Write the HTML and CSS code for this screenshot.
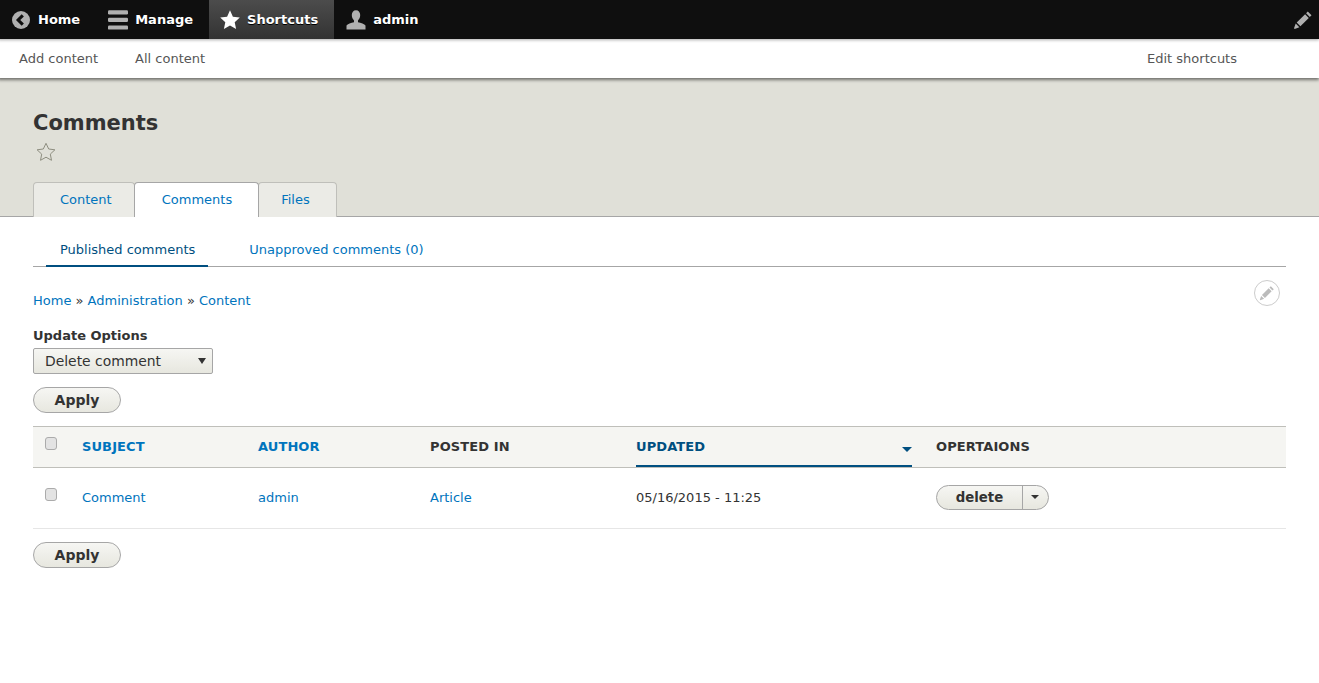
FILE: index.html
```html
<!DOCTYPE html>
<html lang="en">
<head>
<meta charset="utf-8">
<title>Comments</title>
<link rel="stylesheet" href="styles.css">
</head>
<body>
<nav class="toolbar">
  <div class="toolbar-items">
    <a class="tool tool-home" href="#"><svg class="ico" viewBox="0 0 20 20"><circle cx="10" cy="10" r="10" fill="#b0b0b0"/><path d="M12 4.800 6.800 10l5.200 5.200" fill="none" stroke="#0f0f0f" stroke-width="3.400"/></svg>Home</a>
    <a class="tool tool-manage" href="#"><svg class="ico-menu" viewBox="0 0 20 20"><rect y="0.2" width="20" height="4.200" rx="1.200" fill="#b0b0b0"/><rect y="7.800" width="20" height="4.200" rx="1.200" fill="#b0b0b0"/><rect y="15.400" width="20" height="4.200" rx="1.200" fill="#b0b0b0"/></svg>Manage</a>
    <a class="tool tool-active" href="#"><svg class="ico-star" viewBox="0 0 20 20"><path d="M10 .3l2.900 6.400 6.900.8-5.100 4.700 1.400 6.900L10 15.600l-6.100 3.500 1.400-6.900L.2 7.500l6.900-.8z" fill="#fff"/></svg>Shortcuts</a>
    <a class="tool tool-user" href="#"><svg class="ico-user" viewBox="0 0 20 20"><path d="M10 .3c2.700 0 4.200 2.100 4.200 4.800 0 2.300-1 4.300-2.200 5.300v1.800c2.800.6 6.600 1.700 7.500 3.400v4H.5v-4c.9-1.700 4.700-2.800 7.500-3.400v-1.800c-1.200-1-2.200-3-2.200-5.300C5.800 2.400 7.300.3 10 .3z" fill="#b0b0b0"/></svg>admin</a>
  </div>
  <a class="pencil" href="#" aria-label="Edit"><svg viewBox="0 0 20 20"><path d="M14.800 1.500l3.700 3.700-1.700 1.700-3.700-3.700zM12.100 4.200l3.700 3.700-8.400 8.400-3.700-3.700zM2.700 13.600l3.700 3.700-4.700 1.700-.7-.7z" fill="#b0b0b0"/></svg></a>
</nav>
<div class="tray">
  <div class="tray-links">
    <a href="#">Add content</a>
    <a href="#">All content</a>
  </div>
  <a class="tray-edit" href="#">Edit shortcuts</a>
</div>
<header class="page-head">
  <h1>Comments</h1>
  <svg class="fav" viewBox="0 0 20 20"><path d="M10 1.300l2.700 5.700 6.200.8-4.600 4.300 1.200 6.200L10 15.200l-5.500 3.100 1.200-6.200-4.600-4.300 6.200-.8z" fill="none" stroke="#8e8e80" stroke-width="1"/></svg>
  <ul class="tabs">
    <li class="tab-first"><a href="#">Content</a></li>
    <li class="tab-active"><a href="#">Comments</a></li>
    <li class="tab-last"><a href="#">Files</a></li>
  </ul>
</header>
<main class="content">
  <ul class="subtabs">
    <li class="subtab-active"><a href="#">Published comments</a></li>
    <li><a href="#">Unapproved comments (0)</a></li>
  </ul>
  <div class="crumb-row">
    <div class="crumbs"><a href="#">Home</a> » <a href="#">Administration</a> » <a href="#">Content</a></div>
    <a class="ctx" href="#" aria-label="Configure"><svg viewBox="0 0 20 20"><path d="M14.800 1.500l3.700 3.700-1.700 1.700-3.700-3.700zM12.100 4.200l3.700 3.700-8.400 8.400-3.700-3.700zM2.700 13.600l3.700 3.700-4.700 1.700-.7-.7z" fill="#bbb"/></svg></a>
  </div>
  <label class="field-label">Update Options</label>
  <div class="select"><span>Delete comment</span><i class="caret"></i></div>
  <button class="btn" type="button">Apply</button>
  <table class="grid">
    <thead>
      <tr>
        <th class="c-check"><span class="check"></span></th>
        <th class="c-subject"><a href="#">SUBJECT</a></th>
        <th class="c-author"><a href="#">AUTHOR</a></th>
        <th class="c-posted">POSTED IN</th>
        <th class="c-updated"><a class="sorted" href="#">UPDATED<i class="sort-caret"></i></a></th>
        <th>OPERTAIONS</th>
      </tr>
    </thead>
    <tbody>
      <tr>
        <td><span class="check"></span></td>
        <td><a href="#">Comment</a></td>
        <td><a href="#">admin</a></td>
        <td><a href="#">Article</a></td>
        <td>05/16/2015 - 11:25</td>
        <td><div class="dropbutton"><span class="drop-main">delete</span><span class="drop-toggle"><i class="caret-small"></i></span></div></td>
      </tr>
    </tbody>
  </table>
  <button class="btn btn-bottom" type="button">Apply</button>
</main>
</body>
</html>
```
FILE: styles.css
```css
* { box-sizing: border-box; }
html, body { margin: 0; padding: 0; }
body {
  font-family: "DejaVu Sans", sans-serif;
  font-size: 13px;
  color: #333;
  background: #fff;
  height: 683px;
  overflow: hidden;
}
a { color: #0074bd; text-decoration: none; }
ul { list-style: none; margin: 0; padding: 0; }

.toolbar {
  height: 39px;
  background: #0f0f0f;
  display: flex;
  justify-content: space-between;
  align-items: stretch;
  position: relative;
  z-index: 2;
  box-shadow: -1px 0 3px 1px rgba(0, 0, 0, 0.33);
}
.toolbar-items { display: flex; }
.tool {
  display: flex;
  align-items: center;
  color: #fff;
  font-weight: bold;
  font-size: 13px;
  padding: 0 15px 0 12px;
  text-shadow: 0 1px 0 #000;
}
.tool-home { padding-right: 16px; }
.ico { width: 18px; height: 18px; margin-right: 8px; }
.tool-manage { padding: 0 16px 0 12px; }
.ico-menu { width: 20px; height: 20px; margin-right: 7px; }
.tool-active {
  background: linear-gradient(#4c4c4c, #333);
  padding: 0 16px 0 11px;
}
.ico-star { width: 20px; height: 20px; margin-right: 7px; }
.tool-user { padding: 0 12px 0 12px; }
.ico-user { width: 20px; height: 20px; margin-right: 7px; }
.pencil { width: 20px; height: 20px; margin: 10px 6px 0 0; }
.pencil svg { display: block; width: 20px; height: 20px; }

.tray {
  height: 39px;
  background: #fff;
  display: flex;
  justify-content: space-between;
  align-items: center;
  padding: 0 82px 0 19px;
  box-shadow: -1px 1px 3px 1px rgba(0, 0, 0, 0.5);
  position: relative;
  z-index: 1;
}
.tray a { color: #565656; }
.tray-links { display: flex; gap: 37px; }

.page-head {
  background: #e0e0d8;
  height: 139px;
  padding: 32px 33px 0;
  border-bottom: 1px solid #a6a6a6;
}
.page-head h1 {
  margin: 0;
  font-size: 21px;
  line-height: 26px;
  font-weight: bold;
  color: #333;
}
.fav { display: block; width: 20px; height: 20px; margin: 6px 0 0 3px; }
.tabs { display: flex; margin-top: 20px; }
.tabs li {
  height: 35px;
  background: #ebebe6;
  border: 1px solid #bfbfba;
  border-bottom: 0;
  border-radius: 4px 4px 0 0;
  padding: 0 26px;
  line-height: 34px;
  margin-right: -1px;
}
.tabs .tab-first { padding-right: 22px; }
.tabs .tab-last { padding-left: 22px; }
.tabs .tab-active {
  background: #fff;
  border-color: #a6a6a6;
  position: relative;
  z-index: 1;
  padding-left: 27px;
}

.content { padding: 16px 33px 0; }
.subtabs {
  display: flex;
  height: 34px;
  border-bottom: 1px solid #a6a6a6;
  padding-left: 13px;
  gap: 14px;
}
.subtabs li { padding: 0 13px 0 14px; line-height: 33px; height: 34px; }
.subtabs .subtab-active { border-bottom: 2px solid #004f80; }
.subtabs .subtab-active a { color: #004f80; }
.subtabs .subtab-active + li { margin-left: 13px; }
.crumb-row {
  display: flex;
  justify-content: space-between;
  align-items: flex-start;
  height: 64px;
  padding-top: 13px;
}
.crumbs { margin-top: 12px; line-height: 17px; color: #333; }
.ctx {
  width: 26px;
  height: 26px;
  margin: 0 6px 0 0;
  border: 1px solid #ccc;
  border-radius: 50%;
  background: #fff;
  display: flex;
  align-items: center;
  justify-content: center;
}
.ctx svg { width: 16px; height: 16px; }
.field-label {
  display: block;
  font-weight: bold;
  line-height: 16px;
  margin-top: -3px;
}
.select {
  width: 180px;
  height: 26px;
  margin-top: 4px;
  border: 1px solid #a6a6a6;
  border-radius: 2px;
  background: linear-gradient(#f6f6f3, #e7e7df);
  display: flex;
  align-items: center;
  justify-content: space-between;
  padding: 0 6px 0 11px;
  font-size: 13.9px;
  color: #333;
}
.caret {
  width: 0;
  height: 0;
  border-left: 4.5px solid transparent;
  border-right: 4.5px solid transparent;
  border-top: 6px solid #333;
}
.btn {
  display: block;
  width: 88px;
  height: 26px;
  margin-top: 13px;
  padding: 0;
  border: 1px solid #a6a6a6;
  border-radius: 13px;
  background: linear-gradient(#f6f6f3, #e7e7df);
  font-family: "DejaVu Sans", sans-serif;
  font-weight: bold;
  font-size: 14px;
  color: #333;
}
.btn-bottom { margin-top: 13px; }

.grid {
  width: 1253px;
  margin-top: 13px;
  border-collapse: collapse;
  table-layout: fixed;
}
.grid th {
  height: 41px;
  background: #f5f5f2;
  border-top: 1px solid #bfbfba;
  border-bottom: 1px solid #bfbfba;
  text-align: left;
  padding: 0 12px 2px;
  font-size: 13px;
  letter-spacing: 0.1px;
  font-weight: bold;
  color: #333;
}
.grid td {
  height: 61px;
  padding: 0 12px 2px;
  border-bottom: 1px solid #e6e6e6;
}
.c-check { width: 37px; }
.c-subject { width: 176px; }
.c-author { width: 172px; }
.c-posted { width: 206px; }
.grid .c-updated { width: 300px; padding-bottom: 0; }
.sorted {
  display: flex;
  justify-content: space-between;
  align-items: center;
  height: 40px;
  color: #004f80;
  border-bottom: 2px solid #004f80;
  padding-top: 1px;
}
.sort-caret {
  width: 0;
  height: 0;
  margin-top: 6px;
  border-left: 5px solid transparent;
  border-right: 5px solid transparent;
  border-top: 5px solid #004f80;
}
.check {
  display: block;
  width: 12px;
  height: 13px;
  margin-top: -5px;
  background: #e3e3e3;
  border: 1px solid #ababab;
  border-radius: 3px;
}
.dropbutton {
  display: flex;
  width: 113px;
  height: 25px;
  border: 1px solid #a6a6a6;
  border-radius: 13px;
  background: linear-gradient(#f6f6f3, #e7e7df);
  overflow: hidden;
}
.drop-main {
  width: 86px;
  text-align: center;
  font-weight: bold;
  font-size: 13.3px;
  line-height: 23px;
  color: #333;
  border-right: 1px solid #a6a6a6;
}
.drop-toggle {
  flex: 1;
  display: flex;
  align-items: center;
  justify-content: center;
}
.caret-small {
  width: 0;
  height: 0;
  margin-right: 2px;
  border-left: 4px solid transparent;
  border-right: 4px solid transparent;
  border-top: 4px solid #333;
}
```
